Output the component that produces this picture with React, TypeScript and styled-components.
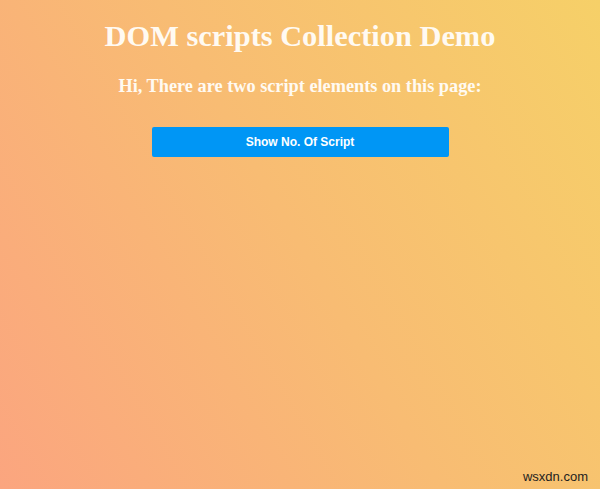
import React from 'react';
import styled, { createGlobalStyle } from 'styled-components';

const GlobalStyle = createGlobalStyle`
  html, body {
    margin: 0;
    padding: 0;
  }
  body {
    font-family: "Liberation Serif", "Times New Roman", serif;
  }
`;

const Page = styled.div`
  position: relative;
  box-sizing: border-box;
  width: 600px;
  height: 489px;
  padding: 19px 0 0;
  background: linear-gradient(60deg, #fba57f 0%, #f8bc73 50%, #f6d068 100%);
  text-align: center;
  color: #fffaf2;
  overflow: hidden;
`;

const Title = styled.h1`
  margin: 0 0 21px;
  font-size: 30.4px;
  font-weight: bold;
  line-height: 35px;
`;

const Subtitle = styled.h3`
  margin: 0 0 30px;
  font-size: 18.3px;
  font-weight: bold;
  line-height: 22px;
`;

const ActionButton = styled.button`
  display: block;
  margin: 0 auto;
  width: 297px;
  height: 30px;
  border: none;
  border-radius: 2px;
  background: #0096f5;
  color: #ffffff;
  font-family: "Liberation Sans", Arial, sans-serif;
  font-size: 12px;
  font-weight: bold;
  cursor: pointer;
`;

const Watermark = styled.span`
  position: absolute;
  right: 12px;
  bottom: 5px;
  color: #1e1e1e;
  font-family: "Liberation Sans", Arial, sans-serif;
  font-size: 13px;
`;

export default function App() {
  return (
    <>
      <GlobalStyle />
      <Page>
        <Title>DOM scripts Collection Demo</Title>
        <Subtitle>Hi, There are two script elements on this page:</Subtitle>
        <ActionButton>Show No. Of Script</ActionButton>
        <Watermark>wsxdn.com</Watermark>
      </Page>
    </>
  );
}
